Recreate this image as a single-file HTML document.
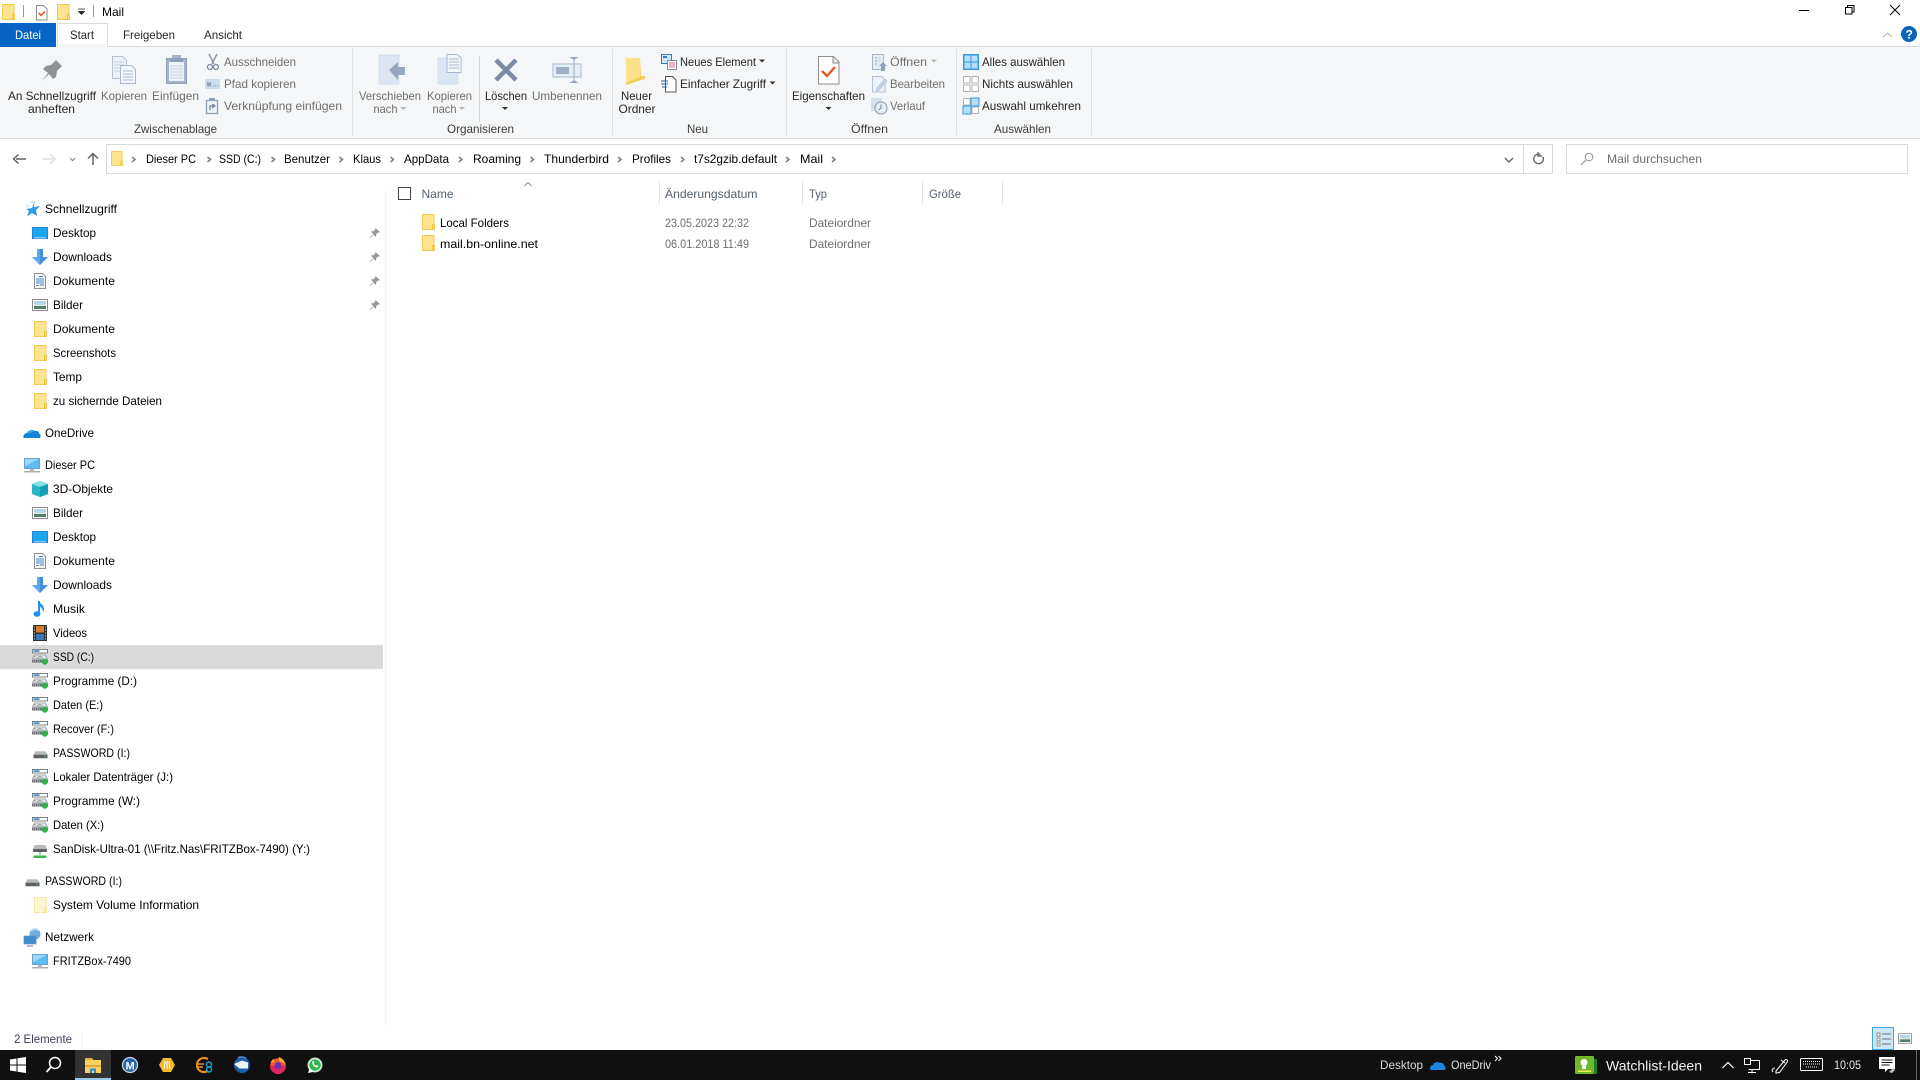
<!DOCTYPE html>
<html lang="de"><head><meta charset="utf-8"><title>Mail</title>
<style>
html,body{margin:0;padding:0;background:#fff;width:1920px;height:1080px;overflow:hidden}
svg{display:block;position:absolute;left:0;top:0}
text{font-family:"Liberation Sans",sans-serif;font-size:12px;fill:#000}
.g text,text.g{fill:#6f6f6f}
.d text{fill:#262626}
.w text,text.w{fill:#e8e8e8}
</style></head><body>
<svg width="1920" height="1080" viewBox="0 0 1920 1080" xmlns="http://www.w3.org/2000/svg">
<defs>
<symbol id="fo" viewBox="0 0 13 16"><path d="M.5.5h11.5v15H.5z" fill="#ffe48f" stroke="#f1c84f"/><path d="M10.5 10.5h2.5v5h-2.500z" fill="#fdd76a" stroke="#eebd3a" stroke-width=".8"/></symbol>
<symbol id="fop" viewBox="0 0 13 16"><path d="M.5.5h11.5v15H.5z" fill="#fff5cf" stroke="#f7e4a3"/><path d="M10.5 10.5h2.5v5h-2.500z" fill="#fdeeb8" stroke="#f5dd95" stroke-width=".8"/></symbol>
<symbol id="dr" viewBox="0 0 16 16"><path d="M.5 .5h15v3.500H.5z" fill="#fff" stroke="#7b8287"/><path d="M1.500 1.300h6v1.500h-6z" fill="#2a7fc4"/><path d="M2.500 5.500h11l2.500 4v3.500H0V9.500z" fill="#a9acae"/><path d="M3 6.500h10l1.500 3H1.500z" fill="#e2e3e4"/><path d="M1 7.500h3M6 7.500h4M4 9h7" stroke="#9a9da0" stroke-width=".7"/><path d="M0 11h16v2.500H0z" fill="#6d7072"/><path d="M1 12h1M3 12h1M5 12h1M7 12h1" stroke="#ddd" stroke-width=".8"/><circle cx="12.800" cy="12.800" r="3" fill="#2cb34a"/></symbol>
<symbol id="dp" viewBox="0 0 16 16"><path d="M2 6h12l2 4v3H0v-3z" fill="#b8babb"/><path d="M0 10h16v4H0z" fill="#5d5f61"/><path d="M12 11.500h2v1h-2z" fill="#4fd25f"/></symbol>
<symbol id="mon" viewBox="0 0 16 16"><path d="M0 0h16v11H0z" fill="#6fa0c8"/><path d="M1 1h14v9H1z" fill="#5dbbf3"/><path d="M1 1h14L1 8z" fill="#9ad9fb"/><path d="M6 11h4v2H6z" fill="#b5bcc2"/><path d="M0 13h16v1.500H0z" fill="#a8b0b6"/></symbol>
<symbol id="desk" viewBox="0 0 16 12"><path d="M0 0h16v12H0z" fill="#1e86dc"/><path d="M1 1h14v9H1z" fill="#1ea5f2"/><path d="M2 10.500h12v.7H2z" fill="#fff"/></symbol>
<symbol id="dl" viewBox="0 0 16 16"><path d="M5 0h6v8h5l-8 8-8-8h5z" fill="#3f8fdc"/><path d="M5 0h3v16L0 8h5z" fill="#57a8ee"/></symbol>
<symbol id="doc" viewBox="0 0 12 16"><path d="M.5.5h8l3 3v12H.5z" fill="#f6f6f6" stroke="#8d9193"/><path d="M5 3.500h4M2 6h8M2 8h8M2 10h8M6 12h4" stroke="#3f8ad4" fill="none"/><path d="M2 12.500h3" stroke="#888"/></symbol>
<symbol id="pic" viewBox="0 0 16 12"><path d="M.5.5h15v11H.5z" fill="#fff" stroke="#8c8f91"/><path d="M2 2h12v4H2z" fill="#b7d5ea"/><path d="M2 6h12v4H2z" fill="#4f7d66"/><path d="M2 5l6 1 6-1v2H2z" fill="#dfe8e0"/></symbol>
<symbol id="pin" viewBox="0 0 10 10"><path d="M5.500 0l4.500 4-1 .8-.9-.3-2 2 .1 1.400-.9.8L3.600 6.600 1 9.500 0 10l.4-1 3-2.800L1.200 4l.8-1 1.400.2 2-2-.2-.7z" fill="#939aa0"/></symbol>
<symbol id="gr" viewBox="0 0 16 16"><path d="M.5.5h6.500v6.500H.5zM9 .5h6.500v6.500H9zM.5 9H7v6.500H.5zM9 9h6.500v6.500H9z" fill="#fff" stroke="#b5b5b5"/></symbol>
</defs>

<!-- ribbon chrome -->
<rect x="0" y="46" width="1920" height="93" fill="#f5f6f7"/>
<rect x="0" y="46" width="1920" height="1" fill="#dadbdc"/>
<rect x="0" y="138" width="1920" height="1" fill="#dadbdc"/>
<rect x="0" y="23" width="56" height="24" fill="#0664c4"/>
<path d="M57.500 47V23.500H107.500V47" fill="#fff" stroke="#dadbdc"/><rect x="58" y="44" width="49" height="4" fill="#f5f6f7"/>
<g fill="#dfe0e1"><rect x="352" y="49" width="1" height="86"/><rect x="612" y="49" width="1" height="86"/><rect x="786" y="49" width="1" height="86"/><rect x="956" y="49" width="1" height="86"/><rect x="1091" y="49" width="1" height="86"/><rect x="479" y="56" width="1" height="66" fill="#d6d7d8"/></g>

<!-- title bar -->
<use href="#fo" x="2" y="4" width="13" height="16"/>
<rect x="23" y="5" width="1" height="12" fill="#999"/>
<path d="M36.500 5.500h7l3.500 3.500v11H36.500z" fill="#fff" stroke="#8a8a8a"/><path d="M38.500 13l2.500 2.500 4-4" fill="none" stroke="#e8541e" stroke-width="1.500"/>
<use href="#fo" x="57" y="4" width="13" height="16"/>
<path d="M78 9h7M78.500 11.500h6l-3 3z" fill="#222" stroke="#222" stroke-width=".7"/>
<rect x="93" y="5" width="1" height="12" fill="#999"/>
<text x="102" y="16" textLength="22" lengthAdjust="spacingAndGlyphs">Mail</text>
<path d="M1799 10.500h10" stroke="#000" fill="none"/>
<path d="M1845.500 7.500h6.500v6.500h-6.500zM1847.500 7V5.500h6.500v6.500h-2" fill="none" stroke="#000"/>
<path d="M1890 5l10 10M1900 5l-10 10" stroke="#000" fill="none"/>
<path d="M1883 37l4.500-4 4.500 4" stroke="#aeb1b3" fill="none"/>
<circle cx="1909" cy="34" r="8" fill="#0a64b8"/><text x="1905.500" y="38.500" style="font-weight:bold;font-size:12px;fill:#fff">?</text>

<!-- tabs -->
<text x="15" y="39" textLength="26" lengthAdjust="spacingAndGlyphs" style="fill:#fff">Datei</text>
<g class="d">
<text x="70" y="39" textLength="24" lengthAdjust="spacingAndGlyphs">Start</text>
<text x="123" y="39" textLength="52" lengthAdjust="spacingAndGlyphs">Freigeben</text>
<text x="204" y="39" textLength="38" lengthAdjust="spacingAndGlyphs">Ansicht</text>
</g>

<!-- ribbon text -->
<g class="d">
<text x="8" y="100" textLength="88" lengthAdjust="spacingAndGlyphs">An Schnellzugriff</text>
<text x="28" y="113" textLength="47" lengthAdjust="spacingAndGlyphs">anheften</text>
<text x="485" y="100" textLength="42" lengthAdjust="spacingAndGlyphs">Löschen</text>
<text x="621" y="100" textLength="31" lengthAdjust="spacingAndGlyphs">Neuer</text>
<text x="618.500" y="113" textLength="37" lengthAdjust="spacingAndGlyphs">Ordner</text>
<text x="680" y="66" textLength="76" lengthAdjust="spacingAndGlyphs">Neues Element</text>
<text x="680" y="88" textLength="86" lengthAdjust="spacingAndGlyphs">Einfacher Zugriff</text>
<text x="792" y="100" textLength="73" lengthAdjust="spacingAndGlyphs">Eigenschaften</text>
<text x="982" y="66" textLength="83" lengthAdjust="spacingAndGlyphs">Alles auswählen</text>
<text x="982" y="88" textLength="91" lengthAdjust="spacingAndGlyphs">Nichts auswählen</text>
<text x="982" y="110" textLength="99" lengthAdjust="spacingAndGlyphs">Auswahl umkehren</text>
</g>
<g>
<text x="134" y="133" textLength="83" lengthAdjust="spacingAndGlyphs" style="fill:#3c3c3c">Zwischenablage</text>
<text x="447" y="133" textLength="67" lengthAdjust="spacingAndGlyphs" style="fill:#3c3c3c">Organisieren</text>
<text x="687" y="133" textLength="21" lengthAdjust="spacingAndGlyphs" style="fill:#3c3c3c">Neu</text>
<text x="851" y="133" textLength="37" lengthAdjust="spacingAndGlyphs" style="fill:#3c3c3c">Öffnen</text>
<text x="994" y="133" textLength="57" lengthAdjust="spacingAndGlyphs" style="fill:#3c3c3c">Auswählen</text>
</g>
<g class="g">
<text x="101" y="100" textLength="46" lengthAdjust="spacingAndGlyphs">Kopieren</text>
<text x="152" y="100" textLength="47" lengthAdjust="spacingAndGlyphs">Einfügen</text>
<text x="224" y="66" textLength="72" lengthAdjust="spacingAndGlyphs">Ausschneiden</text>
<text x="224" y="88" textLength="72" lengthAdjust="spacingAndGlyphs">Pfad kopieren</text>
<text x="224" y="110" textLength="118" lengthAdjust="spacingAndGlyphs">Verknüpfung einfügen</text>
<text x="359" y="100" textLength="62" lengthAdjust="spacingAndGlyphs">Verschieben</text>
<text x="373.500" y="113" textLength="24" lengthAdjust="spacingAndGlyphs">nach</text>
<text x="427" y="100" textLength="45" lengthAdjust="spacingAndGlyphs">Kopieren</text>
<text x="432.500" y="113" textLength="24" lengthAdjust="spacingAndGlyphs">nach</text>
<text x="532" y="100" textLength="70" lengthAdjust="spacingAndGlyphs">Umbenennen</text>
<text x="890" y="66" textLength="37" lengthAdjust="spacingAndGlyphs">Öffnen</text>
<text x="890" y="88" textLength="55" lengthAdjust="spacingAndGlyphs">Bearbeiten</text>
<text x="890" y="110" textLength="35" lengthAdjust="spacingAndGlyphs">Verlauf</text>
</g>
<!-- carets -->
<path d="M759 59.500h6l-3 3zM769.500 81.500h6l-3 3zM825.500 107h6l-3 3zM502 107h6l-3 3z" fill="#333"/>
<path d="M931 59.500h6l-3 3zM400.500 107h6l-3 3zM459 107h6l-3 3z" fill="#b5b5b5"/>

<!-- ribbon icons -->
<g transform="translate(41 60)"><path d="M10 5l5-5 6 6-5 5-1 6-3 2-4-5-7 7 6-8-5-4 3-3z" fill="#8e9297"/></g>
<path d="M112.500 56.500h10l4 4v18h-14z" fill="#eef2f8" stroke="#b8c4d6"/><path d="M114 62h10M114 65h10M114 68h10M114 71h10" stroke="#c2cee0"/>
<path d="M120.500 65.500h11l4 4v14h-15z" fill="#f3f6fb" stroke="#a9b9d0"/><path d="M123 71h10M123 74h10M123 77h10M123 80h10" stroke="#a9b9d0"/>
<path d="M166.500 58.500h20v25h-20z" fill="#a6b3c9" stroke="#8f9fba"/><path d="M169 62h15v19h-15z" fill="#eef2f8"/><path d="M170 66h13M170 69h13M170 72h13M170 75h13M170 78h13" stroke="#c4d0e2"/><path d="M172 58h9v-3h-9z" fill="#a6b3c9"/><path d="M170 58h13v4h-13z" fill="#8f9fba"/>
<path d="M209 54l5 10M217 54l-5 10" stroke="#8f9bae" stroke-width="1.500" fill="none"/><circle cx="210" cy="67" r="2.500" fill="none" stroke="#7d8ba0" stroke-width="1.300"/><circle cx="216" cy="67" r="2.500" fill="none" stroke="#7d8ba0" stroke-width="1.300"/>
<rect x="205" y="79" width="15" height="10" fill="#cddbee"/><path d="M207 82l1 4 1-3 1 3 1-4M213 86h1M215 86h1M217 86h1" stroke="#77889f" fill="none" stroke-width=".8"/>
<path d="M206.500 100.500h11v13h-11z" fill="#eef2f8" stroke="#8fa0b8" stroke-width="1.300"/><rect x="209" y="98" width="6" height="3" fill="#8fa0b8"/><path d="M210 110v-4h4m-2-2l3 2-3 2" stroke="#6f829c" fill="none" stroke-width="1.200"/>
<path d="M379 55h20v29h-20z" fill="#dce6f3" stroke="#c4d2e6" stroke-width=".5"/><path d="M389 70l9-8v5h7v8h-7v5z" fill="#95a7c1"/>
<rect x="438" y="58" width="20" height="26" fill="#dce6f3" stroke="#c4d2e6" stroke-width=".5"/><path d="M447 54.500h10l4 3v15h-14z" fill="#f3f6fb" stroke="#a9b9d0"/><path d="M449 59h10M449 62h10M449 65h10M449 68h10" stroke="#a9b9d0"/>
<path d="M496 60l20 20M516 60l-20 20" stroke="#7c8aa5" stroke-width="4.500" fill="none"/>
<rect x="553" y="64" width="28" height="13" fill="#e6edf6" stroke="#a6bad3"/><rect x="556" y="67" width="13" height="7" fill="#9fb0c7"/><path d="M571 57.500h6l-3 2v21l3 2h-6l3-2v-21z" fill="#96a8c2" stroke="#96a8c2"/>
<path d="M626 58h14l1 18h4v3l-19 6z" fill="#f7cd5e"/><path d="M626 58h14v19l-14 6z" fill="#fde08a"/>
<path d="M661.500 54.500h10v9h-10z" fill="#cfe6f7" stroke="#3a7cb0"/><rect x="663" y="56" width="4" height="2" fill="#3a7cb0"/><path d="M667.500 60.500h9v9h-9z" fill="#fff" stroke="#7b8a99"/><path d="M669 63h6M669 65h6M669 67h6" stroke="#d46c7b"/>
<path d="M665.500 76.500h7l3.500 3.500v12h-10.500z" fill="#fff" stroke="#555"/><path d="M661 81h7M661 84h7M662 87h5" stroke="#1f67ad"/>
<path d="M818.500 56.500h15l5.500 5.500v22h-20.500z" fill="#fff" stroke="#8e8e8e"/><path d="M833 57v6h6" fill="#e8e8e8" stroke="#8e8e8e"/><path d="M822 71l5 5 8-9" stroke="#e8561c" stroke-width="2.300" fill="none"/>
<path d="M872.500 54.500h11v15h-11z" fill="#e6ecf4" stroke="#a8b6c9"/><path d="M875 58h2M875 61h2M875 64h2" stroke="#8fa2bb"/><path d="M878 58h3M878 61h3" stroke="#c5d1e0"/><path d="M883 62l4 4h-2v5h-4v-5h-2z" fill="#8ea3bf"/>
<path d="M872.500 76.500h9l3.500 3.500v12h-12.500z" fill="#edf2f8" stroke="#b5c3d6"/><path d="M877 88l8-9 2 2-8 9-3 1z" fill="#c8d4e4" stroke="#aebdd1" stroke-width=".6"/>
<rect x="871" y="98" width="11" height="13" fill="#d5deeb"/><circle cx="881" cy="108" r="6" fill="#e9eef5" stroke="#8496ae"/><path d="M881 104.500v3.500l-2.500 2" stroke="#6c7f99" fill="none"/>
<g><path d="M963 54h16v16h-16z" fill="#2d9be8"/><path d="M964.500 55.500h6v6h-6zM971.500 55.500h6v6h-6zM964.500 62.500h6v6h-6zM971.500 62.500h6v6h-6z" fill="#b9def7"/></g>
<use href="#gr" x="963" y="76" width="16" height="16"/>
<use href="#gr" x="963" y="98" width="16" height="16"/>
<path d="M971 98h8v8h-8zM963 106h8v8h-8z" fill="#b9def7" stroke="#2d9be8"/>

<!-- address bar -->
<path d="M16 159h10M18.500 154.500L13.500 159l5 4.500" stroke="#5f6368" stroke-width="1.500" fill="none"/>
<path d="M42 159h11M50 154.500l5 4.500-5 4.500" stroke="#dcdcdc" stroke-width="1.500" fill="none"/>
<path d="M70 158l2.500 2.500 2.500-2.500" stroke="#8b8b8b" stroke-width="1.200" fill="none"/>
<path d="M93 165v-12M88 158.500l5-5 5 5" stroke="#5f6368" stroke-width="1.500" fill="none"/>
<rect x="106.500" y="144.500" width="1446" height="29" fill="#fff" stroke="#d9d9d9"/>
<rect x="1523" y="145" width="1" height="28" fill="#d9d9d9"/>
<use href="#fo" x="111" y="151" width="12" height="15"/>
<g fill="none" stroke="#7d7d7d" stroke-width="1.500"><path d="M132 157l3 2.500-3 2.500M207.500 157l3 2.500-3 2.500M271.500 157l3 2.500-3 2.500M339.500 157l3 2.500-3 2.500M390.500 157l3 2.500-3 2.500M459 157l3 2.500-3 2.500M530.500 157l3 2.500-3 2.500M618 157l3 2.500-3 2.500M681 157l3 2.500-3 2.500M786 157l3 2.500-3 2.500M832 157l3 2.500-3 2.500"/></g>
<text x="146" y="163" textLength="50" lengthAdjust="spacingAndGlyphs">Dieser PC</text>
<text x="219" y="163" textLength="42" lengthAdjust="spacingAndGlyphs">SSD (C:)</text>
<text x="284" y="163" textLength="46" lengthAdjust="spacingAndGlyphs">Benutzer</text>
<text x="353" y="163" textLength="28" lengthAdjust="spacingAndGlyphs">Klaus</text>
<text x="404" y="163" textLength="45" lengthAdjust="spacingAndGlyphs">AppData</text>
<text x="473" y="163" textLength="48" lengthAdjust="spacingAndGlyphs">Roaming</text>
<text x="544" y="163" textLength="65" lengthAdjust="spacingAndGlyphs">Thunderbird</text>
<text x="632" y="163" textLength="39" lengthAdjust="spacingAndGlyphs">Profiles</text>
<text x="694" y="163" textLength="83" lengthAdjust="spacingAndGlyphs">t7s2gzib.default</text>
<text x="800" y="163" textLength="23" lengthAdjust="spacingAndGlyphs">Mail</text>
<path d="M1505 158l4 4 4-4" stroke="#666" stroke-width="1.500" fill="none"/>
<path d="M1543 157a4.800 4.800 0 1 1-2.500-2.500M1538 152v4h4" stroke="#6b6b6b" stroke-width="1.400" fill="none"/>
<rect x="1566.500" y="144.500" width="341" height="29" fill="#fff" stroke="#d9d9d9"/>
<circle cx="1589" cy="157" r="3.800" fill="none" stroke="#8f8f8f"/><path d="M1586 160l-5 5" stroke="#b97f7f" fill="none"/>
<text x="1607" y="163" textLength="95" lengthAdjust="spacingAndGlyphs" style="fill:#6d6d6d">Mail durchsuchen</text>

<!-- nav pane -->
<rect x="385" y="190" width="1" height="836" fill="#f2f2f2"/>
<rect x="0" y="645" width="383" height="24" fill="#d9d9d9"/>
<g>
<path d="M26 209l6-1 2.500-6.500-.5 5.500 6-1-4 4 1 6-5-3-5 3.500 2-5.500z" fill="#2f9be8"/><path d="M30 202h5M26 206h3" stroke="#9cd0f5" fill="none"/>
<text x="45" y="213" textLength="72" lengthAdjust="spacingAndGlyphs">Schnellzugriff</text>
<use href="#desk" x="32" y="227" width="16" height="12"/><text x="53" y="237" textLength="43" lengthAdjust="spacingAndGlyphs">Desktop</text>
<use href="#dl" x="32" y="249" width="16" height="16"/><text x="53" y="261" textLength="59" lengthAdjust="spacingAndGlyphs">Downloads</text>
<use href="#doc" x="34" y="273" width="12" height="16"/><text x="53" y="285" textLength="62" lengthAdjust="spacingAndGlyphs">Dokumente</text>
<use href="#pic" x="32" y="299" width="16" height="12"/><text x="53" y="309" textLength="30" lengthAdjust="spacingAndGlyphs">Bilder</text>
<use href="#pin" x="370" y="228" width="10" height="10"/><use href="#pin" x="370" y="252" width="10" height="10"/><use href="#pin" x="370" y="276" width="10" height="10"/><use href="#pin" x="370" y="300" width="10" height="10"/>
<use href="#fo" x="34" y="321" width="13" height="16"/><text x="53" y="333" textLength="62" lengthAdjust="spacingAndGlyphs">Dokumente</text>
<use href="#fo" x="34" y="345" width="13" height="16"/><text x="53" y="357" textLength="63" lengthAdjust="spacingAndGlyphs">Screenshots</text>
<use href="#fo" x="34" y="369" width="13" height="16"/><text x="53" y="381" textLength="29" lengthAdjust="spacingAndGlyphs">Temp</text>
<use href="#fo" x="34" y="393" width="13" height="16"/><text x="53" y="405" textLength="109" lengthAdjust="spacingAndGlyphs">zu sichernde Dateien</text>
<path d="M24 438c-1.500 0-.5-5 3-5 1-3 6-4 8-2 2.500-.5 4 1 4.500 3 1.500 0 1.500 4 0 4z" fill="#1483d6"/><path d="M27 433c1-3 6-4 8-2-2 0-3 1-4 2z" fill="#4aa8ea"/>
<text x="45" y="437" textLength="49" lengthAdjust="spacingAndGlyphs">OneDrive</text>
<use href="#mon" x="24" y="458" width="16" height="16"/><text x="45" y="469" textLength="50" lengthAdjust="spacingAndGlyphs">Dieser PC</text>
<path d="M32 484l8-3 8 3v10l-8 3-8-3z" fill="#2bb5c8"/><path d="M32 484l8 3 8-3-8-3z" fill="#86e0ea"/><path d="M40 487v10l8-3v-10z" fill="#149fb5"/>
<text x="53" y="493" textLength="60" lengthAdjust="spacingAndGlyphs">3D-Objekte</text>
<use href="#pic" x="32" y="507" width="16" height="12"/><text x="53" y="517" textLength="30" lengthAdjust="spacingAndGlyphs">Bilder</text>
<use href="#desk" x="32" y="531" width="16" height="12"/><text x="53" y="541" textLength="43" lengthAdjust="spacingAndGlyphs">Desktop</text>
<use href="#doc" x="34" y="553" width="12" height="16"/><text x="53" y="565" textLength="62" lengthAdjust="spacingAndGlyphs">Dokumente</text>
<use href="#dl" x="32" y="577" width="16" height="16"/><text x="53" y="589" textLength="59" lengthAdjust="spacingAndGlyphs">Downloads</text>
<path d="M39 601v13.500" stroke="#1f94e6" stroke-width="2" fill="none"/><ellipse cx="37" cy="614" rx="3.500" ry="2.800" fill="#1f94e6"/><path d="M39 601c1 3 5 4 5 8 0 2-1 3-1 3 0-3-2-5-4-6z" fill="#1f94e6"/>
<text x="53" y="613" textLength="32" lengthAdjust="spacingAndGlyphs">Musik</text>
<rect x="33" y="625" width="14" height="16" fill="#333"/><rect x="36" y="626" width="8" height="6.500" fill="#d97e2d"/><rect x="36" y="634" width="8" height="6" fill="#3777b8"/><path d="M34 627h1M34 630h1M34 633h1M34 636h1M34 639h1M45 627h1M45 630h1M45 633h1M45 636h1M45 639h1" stroke="#ddd"/>
<text x="53" y="637" textLength="34" lengthAdjust="spacingAndGlyphs">Videos</text>
<use href="#dr" x="32" y="649" width="16" height="16"/><text x="53" y="661" textLength="41" lengthAdjust="spacingAndGlyphs">SSD (C:)</text>
<use href="#dr" x="32" y="673" width="16" height="16"/><text x="53" y="685" textLength="84" lengthAdjust="spacingAndGlyphs">Programme (D:)</text>
<use href="#dr" x="32" y="697" width="16" height="16"/><text x="53" y="709" textLength="50" lengthAdjust="spacingAndGlyphs">Daten (E:)</text>
<use href="#dr" x="32" y="721" width="16" height="16"/><text x="53" y="733" textLength="61" lengthAdjust="spacingAndGlyphs">Recover (F:)</text>
<use href="#dp" x="33" y="746" width="15" height="14"/><text x="53" y="757" textLength="77" lengthAdjust="spacingAndGlyphs">PASSWORD (I:)</text>
<use href="#dr" x="32" y="769" width="16" height="16"/><text x="53" y="781" textLength="120" lengthAdjust="spacingAndGlyphs">Lokaler Datenträger (J:)</text>
<use href="#dr" x="32" y="793" width="16" height="16"/><text x="53" y="805" textLength="87" lengthAdjust="spacingAndGlyphs">Programme (W:)</text>
<use href="#dr" x="32" y="817" width="16" height="16"/><text x="53" y="829" textLength="51" lengthAdjust="spacingAndGlyphs">Daten (X:)</text>
<path d="M35 845h10l2 4v3H33v-3z" fill="#b6b8ba"/><rect x="33" y="849" width="14" height="3" fill="#5d5f61"/><path d="M40 852v3" stroke="#3aa44a"/><path d="M33.500 855.500h13v2.500h-13z" fill="#3fb54f"/>
<text x="53" y="853" textLength="257" lengthAdjust="spacingAndGlyphs">SanDisk-Ultra-01 (\\Fritz.Nas\FRITZBox-7490) (Y:)</text>
<use href="#dp" x="25" y="874" width="15" height="14"/><text x="45" y="885" textLength="77" lengthAdjust="spacingAndGlyphs">PASSWORD (I:)</text>
<use href="#fop" x="34" y="897" width="13" height="16"/><text x="53" y="909" textLength="146" lengthAdjust="spacingAndGlyphs">System Volume Information</text>
<circle cx="35" cy="934" r="5.500" fill="#6eaedd"/><path d="M31 931c3-2 6-2 8 0" stroke="#c7e3f6" fill="none"/><rect x="24" y="936" width="12" height="8" fill="#3f8fd0" stroke="#6c8eb0" stroke-width=".7"/><path d="M27 946h6" stroke="#9aa9b5" stroke-width="1.500"/>
<text x="45" y="941" textLength="49" lengthAdjust="spacingAndGlyphs">Netzwerk</text>
<use href="#mon" x="32" y="954" width="16" height="16"/><text x="53" y="965" textLength="78" lengthAdjust="spacingAndGlyphs">FRITZBox-7490</text>
</g>

<!-- file list -->
<path d="M524.500 186l3.500-3.500 3.500 3.500" stroke="#8e8e8e" fill="none"/>
<rect x="398.500" y="187.500" width="12" height="12" fill="#fff" stroke="#444"/>
<g fill="#e5e5e5"><rect x="659" y="181" width="1" height="24"/><rect x="802" y="181" width="1" height="24"/><rect x="922" y="181" width="1" height="24"/><rect x="1002" y="181" width="1" height="24"/></g>
<text x="421.500" y="198" textLength="32" lengthAdjust="spacingAndGlyphs" style="fill:#55606e">Name</text>
<text x="665" y="198" textLength="92.500" lengthAdjust="spacingAndGlyphs" style="fill:#55606e">Änderungsdatum</text>
<text x="809" y="198" textLength="18" lengthAdjust="spacingAndGlyphs" style="fill:#55606e">Typ</text>
<text x="929" y="198" textLength="32" lengthAdjust="spacingAndGlyphs" style="fill:#55606e">Größe</text>
<use href="#fo" x="422" y="214" width="13" height="16"/>
<use href="#fo" x="422" y="235" width="13" height="16"/>
<text x="440" y="227" textLength="69" lengthAdjust="spacingAndGlyphs">Local Folders</text>
<text x="440" y="248" textLength="98" lengthAdjust="spacingAndGlyphs">mail.bn-online.net</text>
<text class="g" x="665" y="227" textLength="84" lengthAdjust="spacingAndGlyphs">23.05.2023 22:32</text>
<text class="g" x="665" y="248" textLength="84" lengthAdjust="spacingAndGlyphs">06.01.2018 11:49</text>
<text class="g" x="809" y="227" textLength="62" lengthAdjust="spacingAndGlyphs">Dateiordner</text>
<text class="g" x="809" y="248" textLength="62" lengthAdjust="spacingAndGlyphs">Dateiordner</text>

<!-- status bar -->
<text x="14" y="1043" textLength="58" lengthAdjust="spacingAndGlyphs" style="fill:#3d3d52">2 Elemente</text>
<rect x="82" y="1032" width="1" height="14" fill="#f0f0f0"/>
<rect x="1872.500" y="1027.500" width="21" height="22" fill="#cce8f6" stroke="#3ba6dc"/>
<g stroke="#6b6b6b" fill="none"><path d="M1882 1034h9M1882 1039h9M1882 1044h9"/><path d="M1877 1033h3v3h-3zM1877 1038h3v3h-3zM1877 1043h3v3h-3z" stroke="#909090" fill="#fff"/></g>
<use href="#pic" x="1898" y="1033" width="14" height="11"/>

<!-- taskbar -->
<rect x="0" y="1050" width="1920" height="30" fill="#101010"/>
<rect x="75" y="1050" width="36" height="30" fill="#333"/>
<rect x="75" y="1078" width="36" height="2" fill="#99c9ef"/>
<path d="M10 1059.500l6.500-1v6H10zM17.500 1058.300l8.500-1.300v7.500h-8.500zM10 1065.500h6.500v6l-6.500-1zM17.500 1065.500H26v7.500l-8.500-1.300z" fill="#fff"/>
<circle cx="55" cy="1063" r="5.500" fill="none" stroke="#fff" stroke-width="1.500"/><path d="M51 1067l-4.500 5" stroke="#fff" stroke-width="1.800" fill="none"/>
<path d="M85 1058h7l1.500 2H85z" fill="#e8b343"/><path d="M85 1060h16v13H85z" fill="#fcd25f"/><path d="M85 1065h16v2H85z" fill="#e3a93c"/><path d="M90 1073v-4.500h6v4.500h-2v-2.500h-2v2.500z" fill="#2a88d8"/>
<circle cx="130" cy="1065" r="7.500" fill="#2463a8" stroke="#c9d3de" stroke-width="1.300"/><text x="125.500" y="1069.500" style="fill:#fff;font-weight:bold;font-size:11px">M</text>
<path d="M163 1058h8l4 7-4 7h-8l-4-7z" fill="#f6b92d"/><path d="M165 1061l-1 8M167 1061v8M169 1061l1 8" stroke="#fff" fill="none"/>
<path d="M208 1059c-6-3-11 1-11 6s5 9 11 6" stroke="#ee8a1f" stroke-width="2.200" fill="none"/><path d="M196 1064h8M196 1067h7" stroke="#ee8a1f" stroke-width="1.500"/><circle cx="209" cy="1064.500" r="2.500" fill="none" stroke="#17a3c8" stroke-width="1.500"/><circle cx="209" cy="1069.500" r="2.500" fill="none" stroke="#17a3c8" stroke-width="1.500"/>
<circle cx="242" cy="1065" r="8" fill="#1c5ea6"/><path d="M234 1064l8-3.500 6 2v6h-8.500z" fill="#f1f5fa"/><path d="M238 1058c2-1.500 6-1.500 8 .5" stroke="#4a8fd4" fill="none" stroke-width="1.500"/>
<circle cx="278" cy="1066" r="7.800" fill="#f2572c"/><path d="M270 1066a8 8 0 0 0 16 0z" fill="#e0245f"/><circle cx="278" cy="1065.500" r="3.500" fill="#6a2fb5"/><path d="M279 1057c3 1 6 4 6.500 8-1-2-3-3-5-3-2-2-2-3-1.500-5z" fill="#ffb222"/><path d="M270.500 1063c.5-2 2-3.500 3.500-4.500-.5 2 0 3 2 3.500z" fill="#ff9b28"/>
<circle cx="315" cy="1065" r="7" fill="#fff" stroke="#c9d6c9" stroke-width="1"/><path d="M308 1073l1.500-4.500 3.500 3.500z" fill="#fff"/><circle cx="315" cy="1065" r="5.800" fill="#31b74e"/><path d="M312.500 1061.500c-1 1 0 4 3.500 6 1.500 0 2.500-.5 2.500-1.500l-1.700-1-1 .7c-1-.5-1.700-1.200-2-2.200l.7-.9-1-1.700z" fill="#fff"/>

<text class="w" x="1380" y="1069" textLength="43" lengthAdjust="spacingAndGlyphs" style="fill:#d9d9d9">Desktop</text>
<path d="M1431 1070c-2 0-1-5 2-5 1-3 5-4 7-2 2.500-.5 4 1 4.500 3 1.500 0 1.500 4 0 4z" fill="#1e85d8"/>
<svg x="1451" y="1055" width="40" height="20" viewBox="0 0 40 20"><text x="0" y="14" textLength="46" lengthAdjust="spacingAndGlyphs" style="fill:#e8e8e8">OneDrive</text></svg>
<path d="M1495 1056l2.500 2.500-2.500 2.500M1498.500 1056l2.500 2.500-2.500 2.500" stroke="#fff" fill="none"/>
<rect x="1575" y="1056" width="19" height="18" rx="1.500" fill="#6fb82d"/><rect x="1594" y="1059" width="3" height="15" fill="#1f7d23"/><circle cx="1584" cy="1062.500" r="3.500" fill="#fff"/><rect x="1582" y="1066" width="4" height="3" fill="#fff"/><rect x="1578" y="1070.500" width="13" height="1.500" fill="#f2ee5a"/>
<text x="1606" y="1070.500" textLength="96" lengthAdjust="spacingAndGlyphs" style="font-size:14px;fill:#f2f2f2">Watchlist-Ideen</text>
<path d="M1722.500 1068l5.500-5.500 5.500 5.500" stroke="#fff" stroke-width="1.200" fill="none"/>
<path d="M1748.500 1060.500h11v9h-11M1752 1069.500v3M1748 1072.500h8" stroke="#fff" fill="none"/><rect x="1744.500" y="1058.500" width="6" height="6" fill="#111" stroke="#fff"/>
<path d="M1773 1072c-2-2 0-4 2-4M1776 1071l9-11c1-1 3 0 2.500 1.500l-8 11-3.500.5zM1781 1060l4 3" stroke="#fff" fill="none"/>
<rect x="1800.500" y="1058.500" width="22" height="12" rx="1" fill="none" stroke="#fff"/><path d="M1803 1061.500h17M1803 1064h17M1806 1067h11" stroke="#fff" stroke-dasharray="1 1" fill="none"/>
<text class="w" x="1834" y="1069" textLength="27" lengthAdjust="spacingAndGlyphs" style="fill:#e8e8e8">10:05</text>
<path d="M1879 1057h16v12h-7l-3 3v-3h-6z" fill="#fff"/><path d="M1881.500 1060h11M1881.500 1062.500h11M1881.500 1065h8" stroke="#111"/><path d="M1889 1072l4-4 2 2-3 3z" fill="#bbb"/>
<rect x="1916" y="1050" width="1" height="30" fill="#666"/>
</svg>
</body></html>
